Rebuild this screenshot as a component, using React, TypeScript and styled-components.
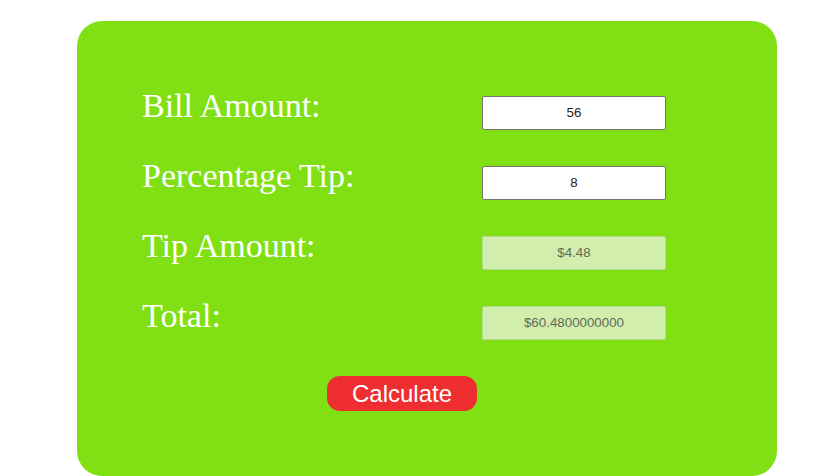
import React, { useState } from 'react'
import styled, { createGlobalStyle } from 'styled-components'

const GlobalStyle = createGlobalStyle`
  body {
    margin: 0;
    background: #ffffff;
    font-family: "Liberation Serif", "Times New Roman", serif;
  }
`

const Card = styled.div`
  box-sizing: border-box;
  margin: 21px 0 0 77px;
  width: 700px;
  height: 455px;
  padding: 65px 0 0 65px;
  background: #80e014;
  border-radius: 25px;
  display: flex;
  flex-direction: column;
`

const Rows = styled.div`
  display: flex;
  flex-direction: column;
  gap: 30px;
`

const Row = styled.div`
  display: flex;
  align-items: baseline;
  height: 40px;
`

const Label = styled.label`
  width: 340px;
  color: #ffffff;
  font-family: "Liberation Serif", "Times New Roman", serif;
  font-size: 34px;
  line-height: 40px;
`

const Field = styled.input<{ $result?: boolean }>`
  box-sizing: border-box;
  width: 184px;
  height: 34px;
  padding: 0 4px;
  border: 1px solid ${({ $result }) => ($result ? '#b3d894' : '#767676')};
  border-radius: 2px;
  background: ${({ $result }) => ($result ? '#d2eead' : '#ffffff')};
  color: ${({ $result }) => ($result ? '#5f6b58' : '#222222')};
  font-family: "Liberation Sans", Arial, sans-serif;
  font-size: 13.33px;
  text-align: center;
  outline: none;
`

const Actions = styled.div`
  margin-top: 40px;
  padding-left: 185px;
`

const CalcButton = styled.button`
  height: 35px;
  padding: 0 25px;
  border: none;
  border-radius: 13px;
  background: #ee2e31;
  color: #ffffff;
  font-family: "Liberation Sans", Arial, sans-serif;
  font-size: 24px;
  cursor: pointer;
`

const App: React.FC = () => {
  const [bill, setBill] = useState('56')
  const [pct, setPct] = useState('8')
  const [tip, setTip] = useState('$4.48')
  const [total, setTotal] = useState('$60.4800000000')

  const calculate = () => {
    const b = parseFloat(bill) || 0
    const t = (b * (parseFloat(pct) || 0)) / 100
    setTip(`$${t.toFixed(2)}`)
    setTotal(`$${(b + t).toFixed(10)}`)
  }

  return (
    <>
      <GlobalStyle />
      <Card>
        <Rows>
          <Row>
            <Label>Bill Amount:</Label>
            <Field value={bill} onChange={e => setBill(e.target.value)} />
          </Row>
          <Row>
            <Label>Percentage Tip:</Label>
            <Field value={pct} onChange={e => setPct(e.target.value)} />
          </Row>
          <Row>
            <Label>Tip Amount:</Label>
            <Field $result disabled value={tip} />
          </Row>
          <Row>
            <Label>Total:</Label>
            <Field $result disabled value={total} />
          </Row>
        </Rows>
        <Actions>
          <CalcButton onClick={calculate}>Calculate</CalcButton>
        </Actions>
      </Card>
    </>
  )
}

export default App
